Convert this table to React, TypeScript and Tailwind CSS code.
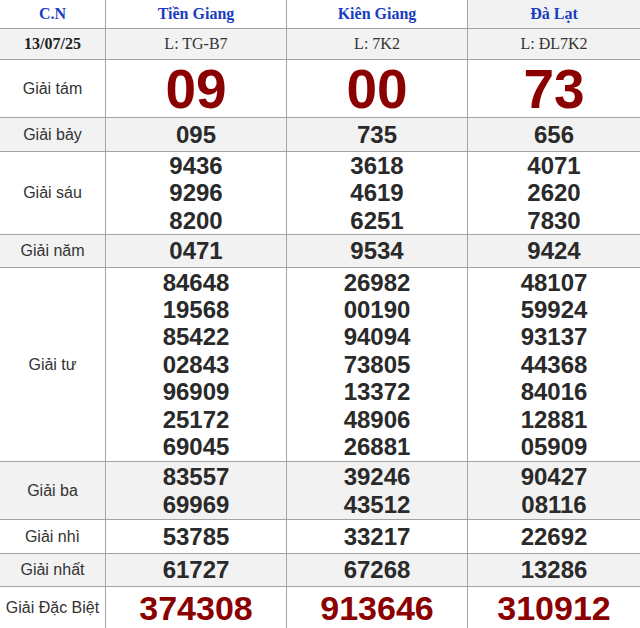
import React from "react";

type Row = {
  label: string;
  h: string;
  gray: boolean;
  vals: string[][];
  kind: "tam" | "num" | "db";
};

const rows: Row[] = [
  { label: "Giải tám", h: "h-[57px]", gray: false, kind: "tam", vals: [["09"], ["00"], ["73"]] },
  { label: "Giải bảy", h: "h-[33px]", gray: true, kind: "num", vals: [["095"], ["735"], ["656"]] },
  {
    label: "Giải sáu",
    h: "h-[82px]",
    gray: false,
    kind: "num",
    vals: [
      ["9436", "9296", "8200"],
      ["3618", "4619", "6251"],
      ["4071", "2620", "7830"],
    ],
  },
  { label: "Giải năm", h: "h-[32px]", gray: true, kind: "num", vals: [["0471"], ["9534"], ["9424"]] },
  {
    label: "Giải tư",
    h: "h-[193px]",
    gray: false,
    kind: "num",
    vals: [
      ["84648", "19568", "85422", "02843", "96909", "25172", "69045"],
      ["26982", "00190", "94094", "73805", "13372", "48906", "26881"],
      ["48107", "59924", "93137", "44368", "84016", "12881", "05909"],
    ],
  },
  {
    label: "Giải ba",
    h: "h-[57px]",
    gray: true,
    kind: "num",
    vals: [
      ["83557", "69969"],
      ["39246", "43512"],
      ["90427", "08116"],
    ],
  },
  { label: "Giải nhì", h: "h-[33px]", gray: false, kind: "num", vals: [["53785"], ["33217"], ["22692"]] },
  { label: "Giải nhất", h: "h-[32px]", gray: true, kind: "num", vals: [["61727"], ["67268"], ["13286"]] },
  { label: "Giải Đặc Biệt", h: "h-[42px]", gray: false, kind: "db", vals: [["374308"], ["913646"], ["310912"]] },
];

const sans = "font-['Liberation_Sans',Arial,sans-serif]";
const serif = "font-['Liberation_Serif','Times_New_Roman',serif]";

function Cell({ children, gray, h }: { children: React.ReactNode; gray: boolean; h: string }) {
  return (
    <div className={`${h} ${gray ? "bg-[#f2f2f2]" : "bg-white"} flex flex-col items-center justify-center`}>
      {children}
    </div>
  );
}

export default function App() {
  return (
    <div className="w-[640px] h-[628px] overflow-hidden bg-white">
      <div className="grid grid-cols-[105px_180px_180px_172px] gap-px bg-[#a3a3a3]">
        {/* header */}
        <Cell gray={false} h="h-[28px]">
          <span className={`${serif} font-bold text-[16px] text-[#1a3dbf]`}>C.N</span>
        </Cell>
        <Cell gray={false} h="h-[28px]">
          <span className={`${serif} font-bold text-[16px] text-[#1a3dbf]`}>Tiền Giang</span>
        </Cell>
        <Cell gray={false} h="h-[28px]">
          <span className={`${serif} font-bold text-[16px] text-[#1a3dbf]`}>Kiên Giang</span>
        </Cell>
        <Cell gray={true} h="h-[28px]">
          <span className={`${serif} font-bold text-[16px] text-[#1a3dbf]`}>Đà Lạt</span>
        </Cell>

        {/* date row */}
        <Cell gray={true} h="h-[30px]">
          <span className={`${serif} font-bold text-[16px] text-[#222]`}>13/07/25</span>
        </Cell>
        <Cell gray={true} h="h-[30px]">
          <span className={`${serif} text-[16px] text-[#333]`}>L: TG-B7</span>
        </Cell>
        <Cell gray={true} h="h-[30px]">
          <span className={`${serif} text-[16px] text-[#333]`}>L: 7K2</span>
        </Cell>
        <Cell gray={true} h="h-[30px]">
          <span className={`${serif} text-[16px] text-[#333]`}>L: ĐL7K2</span>
        </Cell>

        {rows.map((r) => (
          <React.Fragment key={r.label}>
            <Cell gray={r.gray} h={r.h}>
              <span className={`${sans} text-[16px] text-[#333] whitespace-nowrap`}>{r.label}</span>
            </Cell>
            {r.vals.map((col, ci) => (
              <Cell key={ci} gray={r.gray} h={r.h}>
                {col.map((v) =>
                  r.kind === "tam" ? (
                    <span
                      key={v}
                      className={`${sans} font-bold text-[55px] leading-[56px] text-[#8b0000]`}
                    >
                      {v}
                    </span>
                  ) : r.kind === "db" ? (
                    <span
                      key={v}
                      className={`${sans} font-bold text-[34px] leading-[40px] text-[#8b0000]`}
                    >
                      {v}
                    </span>
                  ) : (
                    <span
                      key={v}
                      className={`${sans} font-bold text-[24px] leading-[27.4px] text-[#2a2a2a]`}
                    >
                      {v}
                    </span>
                  )
                )}
              </Cell>
            ))}
          </React.Fragment>
        ))}
      </div>
    </div>
  );
}
